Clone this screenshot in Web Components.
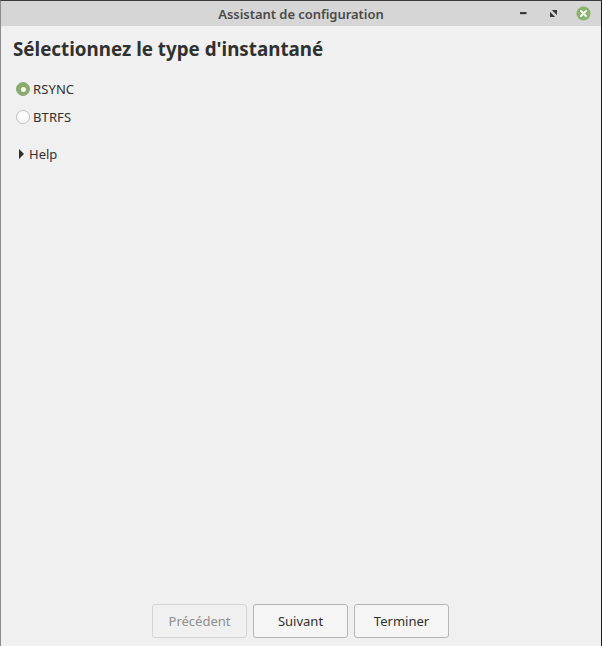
<!DOCTYPE html>
<html lang="fr">
<head>
<meta charset="utf-8">
<title>Assistant de configuration</title>
<style>
  html, body { margin: 0; height: 100%; background: #202020; }
  body { font-family: "Noto Sans", sans-serif; }
</style>
</head>
<body>
<wizard-window heading="Assistant de configuration">
  <wizard-page title-text="Sélectionnez le type d'instantané">
    <radio-option checked>RSYNC</radio-option>
    <radio-option>BTRFS</radio-option>
    <help-expander>Help</help-expander>
  </wizard-page>
  <wizard-button slot="actions" disabled>Précédent</wizard-button>
  <wizard-button slot="actions">Suivant</wizard-button>
  <wizard-button slot="actions">Terminer</wizard-button>
</wizard-window>

<script>
/* === COMPONENTS === */

//========//
// WINDOW //
//========//

class WizardWindow extends HTMLElement {
  css = () => /* css */ `
    :host {
      border-left: 1px solid #8c8c8c;
      border-right: 1px solid #1a1a1a;
      border-top: 1px solid #3a3a3a;
      box-sizing: border-box;
      display: flex;
      flex-direction: column;
      height: 646px;
      width: 602px;
    }

    header {
      align-items: center;
      background: #d6d6d6;
      display: grid;
      grid-template-columns: 1fr auto 1fr;
      height: 25px;
      flex: none;
    }

    h1 {
      color: #4a4a4a;
      font-size: 13px;
      font-weight: 600;
      grid-column: 2;
      letter-spacing: -0.05px;
      margin: 0;
    }

    .controls {
      align-items: center;
      display: flex;
      gap: 19px;
      grid-column: 3;
      justify-content: flex-end;
      padding-right: 10px;
    }

    svg { display: block; }
    .minimize { margin-right: 4px; }

    main {
      background: #f0f0f0;
      display: flex;
      flex: 1;
      flex-direction: column;
      min-height: 0;
    }

    .content { flex: 1; min-height: 0; }

    footer {
      display: flex;
      gap: 6px;
      justify-content: center;
      padding-bottom: 8px;
      padding-right: 1px;
    }
  `;

  html = () => /* html */ `
    <header>
      <h1>${this.getAttribute('heading')}</h1>
      <div class="controls">
        <svg class="minimize" width="7" height="7" viewBox="0 0 7 7"><rect x="0" y="2" width="6.5" height="2.2" fill="#3a3a3a"/></svg>
        <svg width="7" height="7" viewBox="0 0 7 7"><path d="M1.8 0H7V5.2ZM0 1.8V7H5.2Z" fill="#3a3a3a"/></svg>
        <svg width="15" height="15" viewBox="0 0 15 15">
          <circle cx="7.5" cy="7.5" r="7" fill="#8bb26f"/>
          <path d="M5 5 L10 10 M10 5 L5 10" stroke="#f4f7f1" stroke-width="2" stroke-linecap="round"/>
        </svg>
      </div>
    </header>
    <main>
      <div class="content"><slot></slot></div>
      <footer><slot name="actions"></slot></footer>
    </main>
  `;

  connectedCallback() {
    this.attachShadow({ mode: 'open' });
    this.shadowRoot.innerHTML = `<style>${this.css().trim()}</style>${this.html().trim()}`;
  }
}

customElements.define('wizard-window', WizardWindow);

//======//
// PAGE //
//======//

class WizardPage extends HTMLElement {
  css = () => /* css */ `
    :host {
      display: flex;
      flex-direction: column;
      padding: 10px 12px 0 12px;
    }

    h2 {
      color: #303030;
      font-size: 18.8px;
      font-weight: 700;
      line-height: 26px;
      margin: 0 0 13px 0;
    }
  `;

  html = () => /* html */ `
    <h2>${this.getAttribute('title-text')}</h2>
    <slot></slot>
  `;

  connectedCallback() {
    this.attachShadow({ mode: 'open' });
    this.shadowRoot.innerHTML = `<style>${this.css().trim()}</style>${this.html().trim()}`;
  }
}

customElements.define('wizard-page', WizardPage);

//=======//
// RADIO //
//=======//

class RadioOption extends HTMLElement {
  css = () => /* css */ `
    :host {
      align-items: center;
      color: #303030;
      display: flex;
      font-size: 13px;
      gap: 3px;
      height: 28px;
      padding-left: 3px;
    }

    .dot {
      align-items: center;
      background: linear-gradient(#fdfdfd, #f8f8f8);
      border: 1px solid #c2c2c2;
      border-radius: 50%;
      box-sizing: border-box;
      display: flex;
      height: 14px;
      justify-content: center;
      width: 14px;
    }

    :host([checked]) .dot {
      background: #8bab6e;
      border-color: #8bab6e;
    }

    :host([checked]) .dot::after {
      background: #f4f6f1;
      border-radius: 50%;
      content: "";
      height: 5px;
      width: 5px;
    }

    slot { letter-spacing: 0.1px; }
  `;

  html = () => /* html */ `<span class="dot"></span><slot></slot>`;

  connectedCallback() {
    this.attachShadow({ mode: 'open' });
    this.shadowRoot.innerHTML = `<style>${this.css().trim()}</style>${this.html().trim()}`;
  }
}

customElements.define('radio-option', RadioOption);

//==========//
// EXPANDER //
//==========//

class HelpExpander extends HTMLElement {
  css = () => /* css */ `
    :host {
      align-items: center;
      color: #303030;
      display: flex;
      font-size: 13px;
      gap: 5px;
      height: 20px;
      margin-top: 13px;
      padding-left: 6px;
    }

    svg { display: block; }
  `;

  html = () => /* html */ `
    <svg width="5" height="10" viewBox="0 0 5 10"><path d="M0 0 L5 5 L0 10 Z" fill="#303030"/></svg>
    <slot></slot>
  `;

  connectedCallback() {
    this.attachShadow({ mode: 'open' });
    this.shadowRoot.innerHTML = `<style>${this.css().trim()}</style>${this.html().trim()}`;
  }
}

customElements.define('help-expander', HelpExpander);

//========//
// BUTTON //
//========//

class WizardButton extends HTMLElement {
  css = () => /* css */ `
    :host {
      align-items: center;
      background: #f5f5f5;
      border: 1px solid #b5b5b5;
      border-radius: 3px;
      box-sizing: border-box;
      color: #303030;
      display: flex;
      font-size: 13px;
      height: 34px;
      justify-content: center;
      width: 95px;
    }

    :host([disabled]) {
      background: #f0f0f0;
      border-color: #d4d4d4;
      color: #8e8e8e;
    }
  `;

  connectedCallback() {
    this.attachShadow({ mode: 'open' });
    this.shadowRoot.innerHTML = `<style>${this.css().trim()}</style><slot></slot>`;
  }
}

customElements.define('wizard-button', WizardButton);
</script>
</body>
</html>
